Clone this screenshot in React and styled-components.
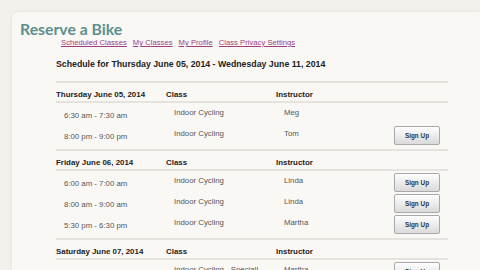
import React from "react";
import styled, { createGlobalStyle } from "styled-components";

const GlobalStyle = createGlobalStyle`
  html, body {
    margin: 0;
    padding: 0;
    background-color: #f3efea;
    overflow: hidden;
  }
  body {
    font-family: "Liberation Sans", Arial, sans-serif;
  }
`;

const Panel = styled.div`
  margin: 12px 0 0 12px;
  min-height: 300px;
  background-color: #faf8f5;
  border-radius: 6px 0 0 0;
  box-shadow: 0 0 2px rgba(0, 0, 0, 0.1);
  padding: 8px 0 0 8px;
`;

const Title = styled.h1`
  margin: 0;
  font-family: Lato, "Open Sans", sans-serif;
  font-weight: 700;
  font-size: 15.8px;
  line-height: 18px;
  color: #5b908e;
`;

const Nav = styled.nav`
  display: flex;
  gap: 6px;
  margin-left: 41px;
  a {
    font-size: 7.7px;
    line-height: 10px;
    color: #a13d80;
    text-decoration: underline;
  }
`;

const Content = styled.div`
  margin-left: 36px;
  width: 392px;
`;

const Heading = styled.h2`
  margin: 10px 0 0 0;
  font-size: 8.75px;
  line-height: 12px;
  font-weight: 700;
  color: #222;
  padding-bottom: 11px;
  border-bottom: 2px solid #e6e3de;
`;

const Section = styled.section`
  border-top: ${(p) => (p.$first ? "none" : "2px solid #e6e3de")};
`;

const Grid = styled.div`
  display: grid;
  grid-template-columns: 110px 110px 118px 54px;
  align-items: center;
`;

const HeaderRow = styled(Grid)`
  padding: 7px 0 1px 0;
  border-bottom: 2px solid #e6e3de;
  font-size: 7.9px;
  line-height: 10px;
  font-weight: 700;
  color: #222;
`;

const Body = styled.div`
  padding: 1px 0 3px 0;
`;

const Row = styled(Grid)`
  height: 21px;
  font-size: 7.8px;
  color: #555;
`;

const Cell = styled.div`
  padding-left: 8px;
  line-height: 10px;
  padding-top: ${(p) => (p.$low ? "3px" : "0")};
  padding-bottom: ${(p) => (p.$low ? "0" : "3px")};
  white-space: nowrap;
`;

const SignUp = styled.button`
  width: 46px;
  height: 19px;
  padding: 0;
  border: 1px solid #a9a9a9;
  border-radius: 2px;
  background: linear-gradient(#fefefe, #dadada);
  font-family: "Liberation Sans", Arial, sans-serif;
  font-size: 6.4px;
  font-weight: 700;
  color: #333;
  cursor: pointer;
`;

const days = [
  {
    date: "Thursday June 05, 2014",
    classes: [
      { time: "6:30 am - 7:30 am", name: "Indoor Cycling", instructor: "Meg", open: false },
      { time: "8:00 pm - 9:00 pm", name: "Indoor Cycling", instructor: "Tom", open: true },
    ],
  },
  {
    date: "Friday June 06, 2014",
    classes: [
      { time: "6:00 am - 7:00 am", name: "Indoor Cycling", instructor: "Linda", open: true },
      { time: "8:00 am - 9:00 am", name: "Indoor Cycling", instructor: "Linda", open: true },
      { time: "5:30 pm - 6:30 pm", name: "Indoor Cycling", instructor: "Martha", open: true },
    ],
  },
  {
    date: "Saturday June 07, 2014",
    classes: [
      { time: "6:30 am - 7:30 am", name: "Indoor Cycling - Special!", instructor: "Martha", open: true },
    ],
  },
];

export default function App() {
  return (
    <>
      <GlobalStyle />
      <Panel>
        <Title>Reserve a Bike</Title>
        <Nav>
          <a href="#">Scheduled Classes</a>
          <a href="#">My Classes</a>
          <a href="#">My Profile</a>
          <a href="#">Class Privacy Settings</a>
        </Nav>
        <Content>
          <Heading>Schedule for Thursday June 05, 2014 - Wednesday June 11, 2014</Heading>
          {days.map((day, i) => (
            <Section key={day.date} $first={i === 0}>
              <HeaderRow>
                <div>{day.date}</div>
                <div>Class</div>
                <div>Instructor</div>
                <div />
              </HeaderRow>
              <Body>
                {day.classes.map((c) => (
                  <Row key={c.time}>
                    <Cell $low>{c.time}</Cell>
                    <Cell>{c.name}</Cell>
                    <Cell>{c.instructor}</Cell>
                    <div>{c.open && <SignUp>Sign Up</SignUp>}</div>
                  </Row>
                ))}
              </Body>
            </Section>
          ))}
        </Content>
      </Panel>
    </>
  );
}
